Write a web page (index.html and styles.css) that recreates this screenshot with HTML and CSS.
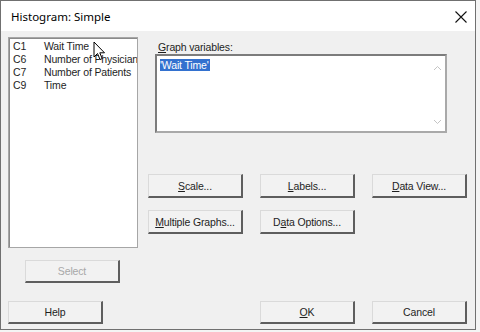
FILE: index.html
```html
<!DOCTYPE html>
<html lang="en">
<head>
  <meta charset="UTF-8">
  <meta name="viewport" content="width=device-width, initial-scale=1.0">
  <title>Histogram: Simple</title>
  <link rel="stylesheet" href="styles.css">
</head>
<body>
  <div class="dialog">
    <!-- title bar -->
    <div class="titlebar">
      <span class="title">Histogram: Simple</span>
      <svg class="close" width="12" height="12" viewBox="0 0 12 12">
        <path d="M0.5 0.5 L11.5 11.5 M11.5 0.5 L0.5 11.5" stroke="#111" stroke-width="1.1" fill="none"/>
      </svg>
    </div>

    <div class="main">
      <!-- column list -->
      <div class="left">
        <div class="listbox">
          <div class="item"><span class="col">C1</span><span>Wait Time</span></div>
          <div class="item"><span class="col">C6</span><span>Number of Physician</span></div>
          <div class="item"><span class="col">C7</span><span>Number of Patients</span></div>
          <div class="item"><span class="col">C9</span><span>Time</span></div>
        </div>
        <button class="btn select" disabled>Select</button>
      </div>

      <div class="right">
        <label class="field-label"><u>G</u>raph variables:</label>
        <div class="textbox">
          <span class="selected">'Wait Time'</span>
          <div class="scroll">
            <svg width="9" height="6" viewBox="0 0 9 6"><path d="M1 5 L4.5 1.5 L8 5" stroke="#c4c4c4" fill="none"/></svg>
            <svg width="9" height="6" viewBox="0 0 9 6"><path d="M1 1 L4.5 4.5 L8 1" stroke="#c4c4c4" fill="none"/></svg>
          </div>
        </div>

        <div class="options">
          <button class="btn"><u>S</u>cale...</button>
          <button class="btn"><u>L</u>abels...</button>
          <button class="btn"><u>D</u>ata View...</button>
          <button class="btn"><u>M</u>ultiple Graphs...</button>
          <button class="btn">D<u>a</u>ta Options...</button>
        </div>
      </div>
    </div>

    <div class="footer">
      <button class="btn">Help</button>
      <button class="btn ok"><u>O</u>K</button>
      <button class="btn cancel">Cancel</button>
    </div>

    <!-- mouse pointer -->
    <svg class="cursor" width="13" height="20" viewBox="0 0 13 20">
      <path d="M1 1 L1 16 L4.5 12.5 L7 18.5 L9.2 17.6 L6.8 11.8 L11.5 11.8 Z" fill="#fff" stroke="#000" stroke-width="1" stroke-linejoin="round"/>
    </svg>
  </div>
</body>
</html>
```

FILE: styles.css
```css
body {
  margin: 0;
  padding: 0;
  background-color: #f4f4f4;
  font-family: "Liberation Sans", Arial, sans-serif;
  font-size: 10.5px;
  letter-spacing: -0.15px;
  color: #1e1e1e;
}
u {
  text-decoration: underline;
  text-underline-offset: 1px;
}
.dialog {
  position: relative;
  width: 476px;
  height: 330px;
  box-sizing: border-box;
  border: 1px solid #707070;
  background-color: #f0f0f0;
  display: flex;
  flex-direction: column;
}
.titlebar {
  height: 30px;
  background-color: #fff;
  display: flex;
  align-items: center;
  justify-content: space-between;
  padding: 0 8px 0 10px;
}
.title {
  font-family: "Noto Sans", sans-serif;
  font-size: 11.5px;
  letter-spacing: 0;
  color: #000;
}
.close {
  margin-top: 1px;
}
.main {
  display: flex;
  padding: 6px 0 0 7px;
}
.left {
  width: 130px;
  display: flex;
  flex-direction: column;
  align-items: flex-start;
}
.listbox {
  width: 130px;
  height: 211px;
  box-sizing: border-box;
  background-color: #fff;
  border: 1px solid #a6a6a6;
  box-shadow: inset 1px 1px 0 #8a8a8a;
  padding: 2px 0 0 4px;
  overflow: hidden;
}
.item {
  height: 13px;
  line-height: 13px;
  white-space: nowrap;
  display: flex;
}
.item .col {
  width: 31px;
  flex: none;
}
.right {
  margin-left: 10px;
  width: 319px;
}
.field-label {
  display: block;
  margin: 4px 0 0 10px;
  height: 13px;
  line-height: 13px;
}
.textbox {
  margin-left: 7px;
  width: 292px;
  height: 79px;
  box-sizing: border-box;
  background-color: #fff;
  border: 2px solid #a9a9a9;
  border-top-color: #7c7c7c;
  border-left-color: #7c7c7c;
  display: flex;
  justify-content: space-between;
  padding: 3px 0 0 3px;
}
.selected {
  align-self: flex-start;
  background-color: #3371cf;
  color: #fff;
  height: 12px;
  line-height: 12px;
  padding-right: 1px;
}
.scroll {
  width: 16px;
  display: flex;
  flex-direction: column;
  justify-content: space-between;
  align-items: center;
  padding: 6px 0 6px;
}
.options {
  margin-top: 41px;
  display: grid;
  grid-template-columns: repeat(3, 95px);
  column-gap: 17px;
  row-gap: 12px;
}
.btn {
  width: 95px;
  height: 24px;
  box-sizing: border-box;
  padding: 0;
  font-family: "Liberation Sans", Arial, sans-serif;
  font-size: 10.5px;
  letter-spacing: -0.15px;
  color: #1e1e1e;
  background-color: #f2f2f2;
  border-top: 1px solid #dadada;
  border-left: 1px solid #dadada;
  border-right: 2px solid #5e5e5e;
  border-bottom: 2px solid #5e5e5e;
}
.btn:disabled {
  color: #a8a8a8;
}
.select {
  margin: 12px 0 0 17px;
  height: 23px;
}
.footer {
  margin-top: auto;
  padding: 0 0 5px 7px;
  display: flex;
}
.footer .btn {
  height: 23px;
}
.ok {
  margin-left: 157px;
}
.cancel {
  margin-left: 17px;
}
.cursor {
  position: absolute;
  left: 92px;
  top: 40px;
}
```
